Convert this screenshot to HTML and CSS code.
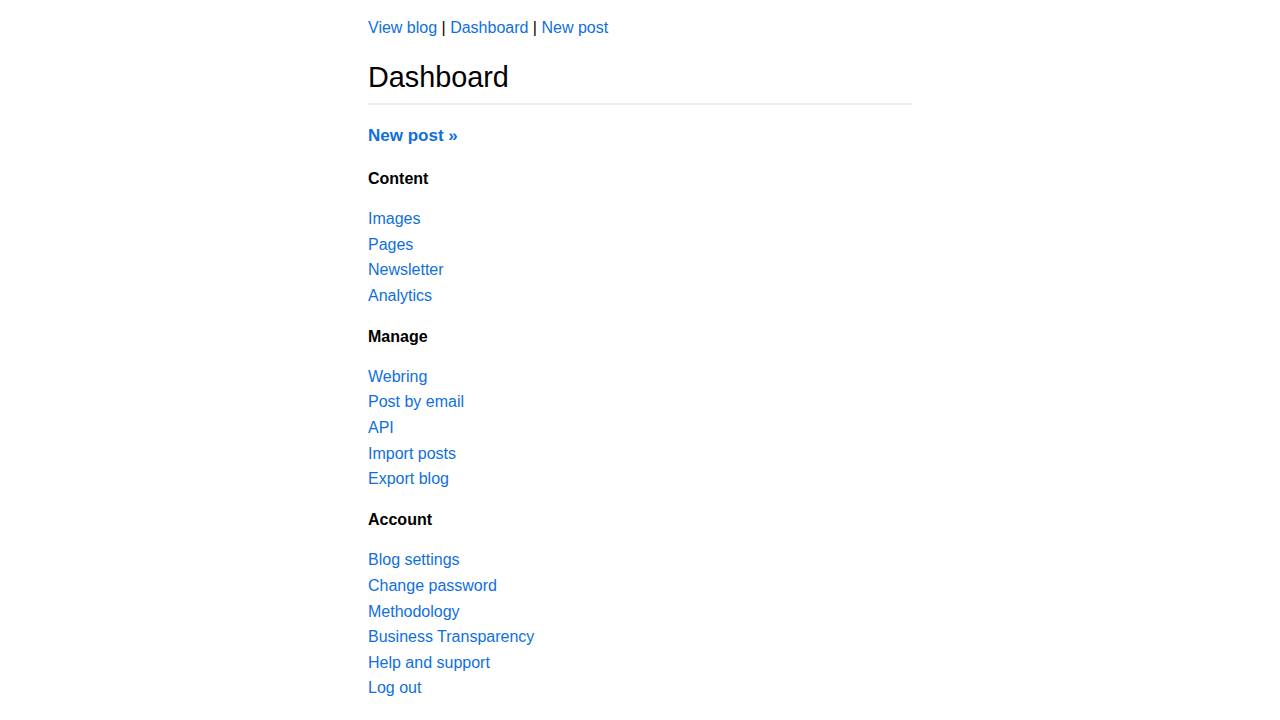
FILE: index.html
```html
<!DOCTYPE html>
<html lang="en">
<head>
  <meta charset="UTF-8">
  <title>Dashboard</title>
  <meta name="viewport" content="width=device-width, initial-scale=1.0">
  <link rel="stylesheet" href="styles.css">
</head>
<body>
  <header class="top-nav">
    <a href="#">View blog</a> | <a href="#">Dashboard</a> | <a href="#">New post</a>
  </header>

  <h1 class="page-title">Dashboard</h1>

  <p class="new-post"><a href="#">New post &raquo;</a></p>

  <h4>Content</h4>
  <ul class="menu">
    <li><a href="#">Images</a></li>
    <li><a href="#">Pages</a></li>
    <li><a href="#">Newsletter</a></li>
    <li><a href="#">Analytics</a></li>
  </ul>

  <h4>Manage</h4>
  <ul class="menu">
    <li><a href="#">Webring</a></li>
    <li><a href="#">Post by email</a></li>
    <li><a href="#">API</a></li>
    <li><a href="#">Import posts</a></li>
    <li><a href="#">Export blog</a></li>
  </ul>

  <h4>Account</h4>
  <ul class="menu">
    <li><a href="#">Blog settings</a></li>
    <li><a href="#">Change password</a></li>
    <li><a href="#">Methodology</a></li>
    <li><a href="#">Business Transparency</a></li>
    <li><a href="#">Help and support</a></li>
    <li><a href="#">Log out</a></li>
  </ul>
</body>
</html>
```

FILE: styles.css
```css
body {
  font-family: Helvetica, "Liberation Sans", Arial, sans-serif;
  font-size: 16px;
  line-height: 1.6;
  color: #000;
  background: #fff;
  max-width: 544px;
  margin: 0 auto;
  padding: 15px 0 20px;
}

a {
  color: #0f6fde;
  text-decoration: none;
}

.top-nav {
  margin: 0;
}

.page-title {
  font-size: 28.8px;
  font-weight: normal;
  line-height: 1.2;
  margin: 19px 0 0;
  padding-bottom: 9px;
  border-bottom: 2px solid #eeeef2;
}

.new-post {
  font-size: 17px;
  font-weight: bold;
  margin: 17px 0 0;
  padding-bottom: 1px;
}

h4 {
  font-size: 16px;
  margin: 15.6px 0 14.4px;
}

.menu {
  list-style: none;
  margin: 0;
  padding: 0;
}
```
